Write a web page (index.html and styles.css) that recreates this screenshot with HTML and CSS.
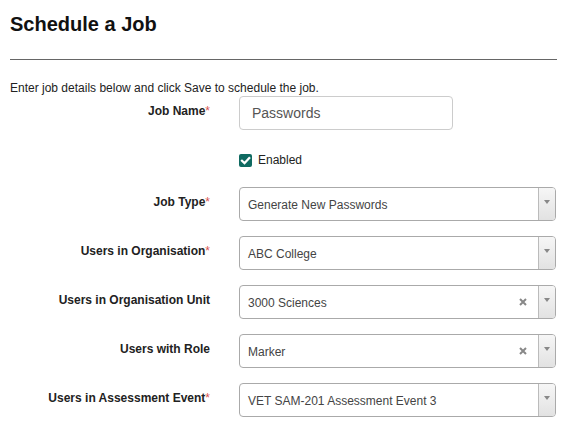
FILE: index.html
```html
<!DOCTYPE html>
<html lang="en">
<head>
<meta charset="utf-8">
<title>Schedule a Job</title>
<link rel="stylesheet" href="styles.css">
</head>
<body>
<div class="page">
  <h1 class="title">Schedule a Job</h1>
  <hr class="rule">
  <p class="intro">Enter job details below and click Save to schedule the job.</p>
  <form class="form">
    <div class="row">
      <label class="label">Job Name<span class="req">*</span></label>
      <div class="control"><input class="text-input" type="text" value="Passwords"></div>
    </div>
    <div class="row">
      <div class="label"></div>
      <div class="control check-row">
        <span class="checkbox"><svg viewBox="0 0 13 13" width="13" height="13"><path d="M3 6.8 L5.5 9.2 L10.2 4" fill="none" stroke="#fff" stroke-width="2.3" stroke-linecap="square"/></svg></span>
        <span class="check-label">Enabled</span>
      </div>
    </div>
    <div class="row">
      <label class="label">Job Type<span class="req">*</span></label>
      <div class="control">
        <div class="select"><span class="value">Generate New Passwords</span><span class="arrow"><i></i></span></div>
      </div>
    </div>
    <div class="row">
      <label class="label">Users in Organisation<span class="req">*</span></label>
      <div class="control">
        <div class="select"><span class="value">ABC College</span><span class="arrow"><i></i></span></div>
      </div>
    </div>
    <div class="row">
      <label class="label">Users in Organisation Unit</label>
      <div class="control">
        <div class="select"><span class="value">3000 Sciences</span><span class="clear"><svg viewBox="0 0 8 8" width="8" height="8"><path d="M1 1 L7 7 M7 1 L1 7" stroke="#888" stroke-width="2"/></svg></span><span class="arrow"><i></i></span></div>
      </div>
    </div>
    <div class="row">
      <label class="label">Users with Role</label>
      <div class="control">
        <div class="select"><span class="value">Marker</span><span class="clear"><svg viewBox="0 0 8 8" width="8" height="8"><path d="M1 1 L7 7 M7 1 L1 7" stroke="#888" stroke-width="2"/></svg></span><span class="arrow"><i></i></span></div>
      </div>
    </div>
    <div class="row">
      <label class="label">Users in Assessment Event<span class="req">*</span></label>
      <div class="control">
        <div class="select"><span class="value">VET SAM-201 Assessment Event 3</span><span class="arrow"><i></i></span></div>
      </div>
    </div>
  </form>
</div>
</body>
</html>
```

FILE: styles.css
```css
html, body {
  margin: 0;
  padding: 0;
  background: #fff;
}
body {
  font-family: "Liberation Sans", Arial, sans-serif;
  font-size: 12px;
  color: #333;
}
.page {
  width: 547px;
  padding-left: 10px;
}
.title {
  margin: 13px 0 0;
  font-size: 20px;
  line-height: 22px;
  font-weight: bold;
  color: #111;
}
.rule {
  margin: 24px 0 0;
  border: 0;
  height: 1px;
  background: #666;
}
.intro {
  margin: 20px 0 0;
  line-height: 16px;
  color: #222;
}
.form {
  margin: 0;
}
.row {
  display: grid;
  grid-template-columns: 200px 317px;
  column-gap: 29px;
  margin-bottom: 15px;
}
.label {
  text-align: right;
  font-weight: bold;
  color: #222;
  padding-top: 7px;
  line-height: 17px;
}
.req {
  color: #d9534f;
  font-weight: normal;
}
.text-input {
  box-sizing: border-box;
  width: 214px;
  height: 34px;
  margin: 0;
  border: 1px solid #ccc;
  border-radius: 4px;
  padding: 0 12px;
  font-family: "Liberation Sans", Arial, sans-serif;
  font-size: 14px;
  color: #555;
  background: #fff;
  outline: none;
}
.check-row {
  display: flex;
  align-items: center;
  padding-top: 7px;
  height: 20px;
}
.checkbox {
  display: flex;
  width: 13px;
  height: 13px;
  background: #0f6a61;
  border-radius: 2px;
  margin-top: -4px;
}
.check-label {
  margin-left: 6px;
  line-height: 17px;
  margin-top: -3px;
  color: #222;
}
.select {
  box-sizing: border-box;
  height: 34px;
  border: 1px solid #aaa;
  border-radius: 4px;
  display: flex;
  align-items: stretch;
  background: #fff;
  overflow: hidden;
}
.value {
  flex: 1;
  display: flex;
  align-items: center;
  padding-left: 8px;
  color: #444;
  padding-top: 1px;
}
.clear {
  display: flex;
  align-items: center;
  margin-right: 11px;
  padding-bottom: 1px;
}
.arrow {
  width: 16px;
  border-left: 1px solid #bbb;
  background: linear-gradient(#f6f6f6, #e2e2e2);
  display: flex;
  justify-content: center;
  align-items: flex-start;
}
.arrow i {
  display: block;
  width: 0;
  height: 0;
  margin-top: 12px;
  border-left: 3px solid transparent;
  border-right: 3px solid transparent;
  border-top: 4px solid #888;
}
```
